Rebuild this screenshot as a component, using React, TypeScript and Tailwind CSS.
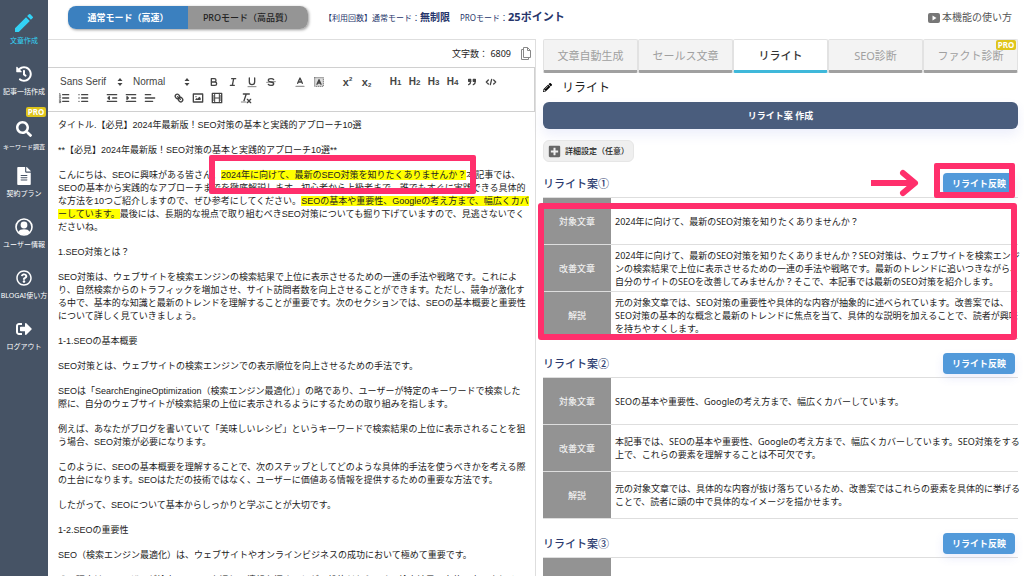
import type { ReactNode } from "react";
import {
  FaFileAlt,
  FaHistory,
  FaPencilAlt,
  FaPlusSquare,
  FaRegQuestionCircle,
  FaSearch,
  FaSignOutAlt,
} from "react-icons/fa";
import { MdEdit } from "react-icons/md";

const UserIcon = () => (
  <svg viewBox="0 0 18 18" className="w-[18px] h-[18px]" fill="none">
    <circle cx="9" cy="9" r="8" stroke="currentColor" strokeWidth="1.6" />
    <circle cx="9" cy="7" r="3.4" fill="currentColor" />
    <path d="M3.4 14.2c.8-2.4 2.8-3 5.6-3s4.800.6 5.600 3A8 8 0 0 1 3.400 14.200Z" fill="currentColor" />
  </svg>
);

const ProBadge = () => (
  <span className="w-5 h-[10px] rounded-[2px] bg-[#dfc51b] text-white text-[8px] leading-[10px] font-bold text-center">
    PRO
  </span>
);

const navItems = [
  { label: "文章作成", icon: <MdEdit size={24} />, active: true },
  { label: "記事一括作成", icon: <FaHistory size={16} /> },
  { label: "キーワード調査", icon: <FaSearch size={16} />, pro: true, small: true },
  { label: "契約プラン", icon: <FaFileAlt size={18} />, tight: true },
  { label: "ユーザー情報", icon: <UserIcon /> },
  { label: "BLOGAI使い方", icon: <FaRegQuestionCircle size={16} /> },
  { label: "ログアウト", icon: <FaSignOutAlt size={16} /> },
];

const Sidebar = () => (
  <nav className="w-12 shrink-0 bg-[#465365] flex flex-col gap-[15px] pt-[11px]">
    {navItems.map((item) => (
      <a
        key={item.label}
        href="#"
        className={`relative flex flex-col items-center whitespace-nowrap ${
          item.active ? "text-[#33d2f5]" : "text-white"
        } ${item.pro ? "mt-1" : ""} ${item.tight ? "-mt-1" : ""}`}
      >
        {item.pro && (
          <span className="absolute right-[2px] -top-[10px] flex">
            <ProBadge />
          </span>
        )}
        <span className="h-6 flex items-center">{item.icon}</span>
        <span
          className={`leading-3 ${item.small ? "text-[6px]" : "text-[7px]"}`}
        >
          {item.label}
        </span>
      </a>
    ))}
  </nav>
);

const TopBar = () => (
  <header className="h-[39px] shrink-0 flex items-center pl-5 pr-3 pb-1 text-[#26356b]">
    <div className="flex w-[240px] h-[23px] rounded-lg overflow-hidden shadow-[1px_1px_3px_rgba(0,0,0,0.4)] text-[9px]">
      <button className="flex-1 bg-[#3b80bf] text-white font-bold">
        通常モード（高速）
      </button>
      <button className="flex-1 bg-[#959595] text-[#222] font-medium">
        PROモード（高品質）
      </button>
    </div>
    <p className="ml-4 text-[8px] flex items-center whitespace-nowrap">
      【利用回数】通常モード：
      <strong className="text-[10px]">無制限</strong>
      <span className="ml-[10px]">PROモード：</span>
      <strong className="text-[11px]">25ポイント</strong>
    </p>
    <a
      href="#"
      className="ml-auto flex items-center gap-[2px] text-[10px] text-[#555]"
    >
      <svg viewBox="0 0 12 10" className="w-3 h-[10px]">
        <rect width="12" height="10" rx="2" fill="#777" />
        <path d="M4.500 2.500v5l4-2.500z" fill="#fff" />
      </svg>
      本機能の使い方
    </a>
  </header>
);

/* ---- editor toolbar ---- */

const Tool = ({ label, children }: { label: string; children: ReactNode }) => (
  <button
    aria-label={label}
    className="w-[19px] h-4 flex items-center justify-center"
  >
    {children}
  </button>
);

const Glyph = ({ children }: { children: ReactNode }) => (
  <svg
    viewBox="0 0 18 18"
    className="w-3 h-3"
    fill="none"
    stroke="#444"
    strokeWidth="2"
    strokeLinecap="round"
    strokeLinejoin="round"
  >
    {children}
  </svg>
);

const Heading = ({ level }: { level: number }) => (
  <Tool label={`見出し${level}`}>
    <span className="text-[10px] leading-3 font-bold">H</span>
    <span className="text-[8px] leading-3 font-bold pt-[2px]">{level}</span>
  </Tool>
);

const Picker = ({
  label,
  value,
  width,
}: {
  label: string;
  value: string;
  width: string;
}) => (
  <div className={`relative h-4 ${width}`}>
    <select
      aria-label={label}
      defaultValue={value}
      className="block appearance-none w-full h-4 pl-[6px] bg-transparent text-[10px] leading-4 font-medium"
    >
      <option>{value}</option>
    </select>
    <svg
      viewBox="0 0 6 8"
      className="absolute right-1 top-1 w-[6px] h-2 pointer-events-none"
      fill="#444"
    >
      <path d="M3 0l2.500 3h-5zM3 8L.5 5h5z" />
    </svg>
  </div>
);

const Toolbar = () => (
  <div className="border-y border-r border-[#d0d0d0] pt-[6px] pb-[5px] px-[6px] text-[#444] font-['Liberation_Sans','Noto_Sans_CJK_JP',sans-serif]">
    <div className="flex flex-wrap gap-x-[10px]">
      <div className="flex">
        <Picker label="フォント" value="Sans Serif" width="w-[73px]" />
        <Picker label="サイズ" value="Normal" width="w-[67px]" />
      </div>
      <div className="flex">
        <Tool label="太字">
          <Glyph>
            <path d="M5 4h4.500a2.500 2.500 0 0 1 0 5H5zM5 9h5.500a2.500 2.500 0 0 1 0 5H5z" />
          </Glyph>
        </Tool>
        <Tool label="斜体">
          <Glyph>
            <path d="M7 4h6M5 14h6M8 14l2-10" />
          </Glyph>
        </Tool>
        <Tool label="下線">
          <Glyph>
            <path d="M5 3v6a4 4 0 0 0 8 0V3" />
            <path d="M3 16h12" strokeWidth="1" />
          </Glyph>
        </Tool>
        <Tool label="取り消し線">
          <Glyph>
            <path d="M13 5.500C12.300 4.400 10.800 4 9 4 6.700 4 5 5 5 6.500S6.500 8.700 9 9s4 1 4 2.500S11.300 14 9 14c-1.800 0-3.300-.4-4-1.500" />
            <path d="M2.500 9.500l13-1" strokeWidth="1" />
          </Glyph>
        </Tool>
      </div>
      <div className="flex">
        <Tool label="文字色">
          <Glyph>
            <path d="M5.500 11L9 3l3.500 8M11.600 9H6.400" />
            <path d="M3 15.500h12" stroke="#999" />
          </Glyph>
        </Tool>
        <Tool label="背景色">
          <Glyph>
            <rect x="2.500" y="2.500" width="13" height="13" fill="#ddd" stroke="#777" strokeWidth="1.500" strokeDasharray="1 2" />
            <path d="M6 12.500L9 5.500l3 7M11 10.500H7" />
          </Glyph>
        </Tool>
      </div>
      <div className="flex">
        <Tool label="上付き">
          <span className="text-[11px] leading-3 font-bold">x</span>
          <span className="text-[6px] leading-3 font-bold pb-[6px]">2</span>
        </Tool>
        <Tool label="下付き">
          <span className="text-[11px] leading-3 font-bold">x</span>
          <span className="text-[6px] leading-3 font-bold pt-[6px]">2</span>
        </Tool>
      </div>
      <div className="flex">
        <Heading level={1} />
        <Heading level={2} />
        <Heading level={3} />
        <Heading level={4} />
        <Tool label="引用">
          <Glyph>
            <path d="M4 5h3v3H4zM11 5h3v3h-3z" fill="#444" />
            <path d="M7 8c0 4-3 5-3 5M14 8c0 4-3 5-3 5" />
          </Glyph>
        </Tool>
        <Tool label="コード">
          <Glyph>
            <path d="M5 6L2 9l3 3M13 6l3 3-3 3M10 5L8 13" />
          </Glyph>
        </Tool>
      </div>
    </div>
    <div className="flex flex-wrap gap-x-[10px]">
      <div className="flex">
        <Tool label="番号付きリスト">
          <Glyph>
            <path d="M7 4h9M7 9h9M7 14h9" />
            <path d="M2 3l1-1v4M2 6h2M2 8h2L2 11h2M2 13h2v3H2M2 14.500h2" strokeWidth="1" />
          </Glyph>
        </Tool>
        <Tool label="箇条書き">
          <Glyph>
            <path d="M7 4h9M7 9h9M7 14h9M3 4h0M3 9h0M3 14h0" />
          </Glyph>
        </Tool>
      </div>
      <div className="flex">
        <Tool label="インデント解除">
          <Glyph>
            <path d="M2 4h14M2 14h14M10 9h6" />
            <path d="M5 7v4L3 9z" fill="#444" />
          </Glyph>
        </Tool>
        <Tool label="インデント">
          <Glyph>
            <path d="M2 4h14M2 14h14M10 9h6" />
            <path d="M3 7v4l2-2z" fill="#444" />
          </Glyph>
        </Tool>
        <Tool label="配置">
          <Glyph>
            <path d="M2 4h8M2 9h14M2 14h11" />
          </Glyph>
        </Tool>
      </div>
      <div className="flex">
        <Tool label="リンク">
          <Glyph>
            <path d="M7 7l4 4" />
            <path d="M8.900 4.577a3.476 3.476 0 0 1 .36 4.679A3.476 3.476 0 0 1 4.577 8.900C3.185 7.500 2.035 6.400 4.217 4.217S7.500 3.185 8.900 4.577Z" />
            <path d="M13.423 9.100a3.476 3.476 0 0 0-4.679-.36 3.476 3.476 0 0 0 .36 4.679c1.392 1.392 2.500 2.542 4.679.36S14.815 10.500 13.423 9.100Z" />
          </Glyph>
        </Tool>
        <Tool label="画像">
          <Glyph>
            <rect x="2" y="3" width="14" height="12" />
            <circle cx="6" cy="7" r="1" fill="#444" stroke="none" />
            <path d="M5 12v-1l2-2 1 1 3-3 2 2v3z" fill="#444" stroke="none" />
          </Glyph>
        </Tool>
        <Tool label="動画">
          <Glyph>
            <rect x="2" y="2" width="14" height="14" />
            <path d="M5.500 2v14M12.500 2v14M6 9h6M2 6h3M2 9h3M2 12h3M13 6h3M13 9h3M13 12h3" strokeWidth="1.500" />
          </Glyph>
        </Tool>
      </div>
      <div className="flex">
        <Tool label="書式クリア">
          <Glyph>
            <path d="M5 3h9M6 13L9.400 3M11 11l5 5M16 11l-5 5" />
            <path d="M2 15h7" strokeWidth="1" />
          </Glyph>
        </Tool>
      </div>
    </div>
  </div>
);

const Mark = ({ children }: { children: ReactNode }) => (
  <mark className="bg-[#ffff00] text-inherit">{children}</mark>
);

const paragraphs = [
  "1.SEO対策とは？",
  "SEO対策は、ウェブサイトを検索エンジンの検索結果で上位に表示させるための一連の手法や戦略です。これによ\nり、自然検索からのトラフィックを増加させ、サイト訪問者数を向上させることができます。ただし、競争が激化す\nる中で、基本的な知識と最新のトレンドを理解することが重要です。次のセクションでは、SEOの基本概要と重要性\nについて詳しく見ていきましょう。",
  "1-1.SEOの基本概要",
  "SEO対策とは、ウェブサイトの検索エンジンでの表示順位を向上させるための手法です。",
  "SEOは「SearchEngineOptimization（検索エンジン最適化）」の略であり、ユーザーが特定のキーワードで検索した\n際に、自分のウェブサイトが検索結果の上位に表示されるようにするための取り組みを指します。",
  "例えば、あなたがブログを書いていて「美味しいレシピ」というキーワードで検索結果の上位に表示されることを狙\nう場合、SEO対策が必要になります。",
  "このように、SEOの基本概要を理解することで、次のステップとしてどのような具体的手法を使うべきかを考える際\nの土台になります。SEOはただの技術ではなく、ユーザーに価値ある情報を提供するための重要な方法です。",
  "したがって、SEOについて基本からしっかりと学ぶことが大切です。",
  "1-2.SEOの重要性",
  "SEO（検索エンジン最適化）は、ウェブサイトやオンラインビジネスの成功において極めて重要です。",
  "その理由は、ユーザーが検索エンジンを通じて情報を探すことが一般的だからです。検索結果の上位に表示されるこ",
];

const Editor = () => (
  <section className="flex flex-col min-h-0 overflow-hidden border-t border-r border-[#dedede]">
    <div className="h-[27px] shrink-0 flex items-center justify-end pr-1 text-[9px] text-[#222]">
      <span>文字数： 6809</span>
      <button aria-label="コピー" className="ml-[10px]">
        <svg
          viewBox="0 0 10 13"
          className="w-[10px] h-[13px]"
          fill="none"
          stroke="#888"
        >
          <path d="M2.500.5h4l3 3v7h-7zM6.500.5v3h3" />
          <path d="M2.500 2.500h-2v10h7v-2" />
        </svg>
      </button>
    </div>
    <Toolbar />
    <div
      role="textbox"
      aria-label="本文"
      aria-multiline="true"
      className="relative flex flex-col gap-3 px-[10px] pt-[7px] whitespace-pre text-[9px] leading-[13px] text-[#222] font-['Liberation_Sans','Noto_Sans_CJK_JP',sans-serif]"
    >
      <p>タイトル.【必見】2024年最新版！SEO対策の基本と実践的アプローチ10選</p>
      <p>**【必見】2024年最新版！SEO対策の基本と実践的アプローチ10選**</p>
      <p>
        こんにちは、SEOに興味がある皆さん、
        <Mark>2024年に向けて、最新のSEO対策を知りたくありませんか？</Mark>
        {"本記事では、\nSEOの基本から実践的なアプローチまでを徹底解説します。初心者から上級者まで、誰でもすぐに実践できる具体的\nな方法を10つご紹介しますので、ぜひ参考にしてください。"}
        <Mark>{"SEOの基本や重要性、Googleの考え方まで、幅広くカバ\nーしています。"}</Mark>
        {"最後には、長期的な視点で取り組むべきSEO対策についても掘り下げていますので、見逃さないでく\nださいね。"}
      </p>
      {paragraphs.map((text) => (
        <p key={text}>{text}</p>
      ))}
      <div className="absolute left-[161px] top-[43px] w-[267px] h-[39px] border-[6px] border-[#ff2f6c] rounded-[2px] pointer-events-none" />
    </div>
  </section>
);

/* ---- rewrite panel ---- */

const tabs = [
  { label: "文章自動生成" },
  { label: "セールス文章" },
  { label: "リライト", active: true },
  { label: "SEO診断" },
  { label: "ファクト診断", pro: true },
];

const proposals = [
  {
    title: "リライト案①",
    marked: true,
    rows: [
      ["対象文章", "2024年に向けて、最新のSEO対策を知りたくありませんか？"],
      [
        "改善文章",
        "2024年に向けて、最新のSEO対策を知りたくありませんか？SEO対策は、ウェブサイトを検索エンジ\nンの検索結果で上位に表示させるための一連の手法や戦略です。最新のトレンドに追いつきながら、\n自分のサイトのSEOを改善してみませんか？そこで、本記事では最新のSEO対策を紹介します。",
      ],
      [
        "解説",
        "元の対象文章では、SEO対策の重要性や具体的な内容が抽象的に述べられています。改善案では、\nSEO対策の基本的な概念と最新のトレンドに焦点を当て、具体的な説明を加えることで、読者が興味\nを持ちやすくします。",
      ],
    ],
  },
  {
    title: "リライト案②",
    rows: [
      ["対象文章", "SEOの基本や重要性、Googleの考え方まで、幅広くカバーしています。"],
      [
        "改善文章",
        "本記事では、SEOの基本や重要性、Googleの考え方まで、幅広くカバーしています。SEO対策をする\n上で、これらの要素を理解することは不可欠です。",
      ],
      [
        "解説",
        "元の対象文章では、具体的な内容が抜け落ちているため、改善案ではこれらの要素を具体的に挙げる\nことで、読者に頭の中で具体的なイメージを描かせます。",
      ],
    ],
  },
  {
    title: "リライト案③",
    rows: [["対象文章", ""]],
  },
];

const Proposal = ({ title, marked, rows }: (typeof proposals)[number]) => (
  <article className="relative">
    <div className="flex items-center justify-between h-[21px] mb-[3px] pr-[3px]">
      <h3 className="text-[11px] leading-4 font-medium text-[#2b3b6e]">
        {title}
      </h3>
      <button className="w-[72px] h-[21px] rounded-[4px] bg-[#5199da] text-white text-[9px] font-bold shadow-[0_4px_10px_rgba(80,100,220,0.12)]">
        リライト反映
      </button>
    </div>
    <table className="w-full table-fixed border-collapse text-[9px] leading-[13px]">
      <tbody>
        {rows.map(([label, text]) => (
          <tr key={label} className="h-[47px] border-y border-[#dedede]">
            <th className="w-[68px] bg-[#939393] text-[#eee] font-medium">
              {label}
            </th>
            <td className="pl-1 text-[#222] whitespace-pre">{text}</td>
          </tr>
        ))}
      </tbody>
    </table>
    {marked && (
      <div className="pointer-events-none text-[#ff2f6c]">
        <svg
          viewBox="0 0 50 28"
          className="absolute right-[98px] -top-[4px] w-[50px] h-7"
          fill="none"
          stroke="currentColor"
          strokeWidth="6"
        >
          <path d="M1 14h42" />
          <path d="M33 4l12 10-12 10" strokeLinecap="round" strokeLinejoin="round" />
        </svg>
        <div className="absolute right-[3px] -top-[10px] w-[81px] h-[35px] border-[6px] border-current rounded-[2px]" />
        <div className="absolute -left-[5px] right-[1px] top-[30px] h-[137px] border-[6px] border-current rounded-[3px]" />
      </div>
    )}
  </article>
);

const RewritePanel = () => (
  <section className="pl-[7px] pr-[6px] min-h-0">
    <div role="tablist" className="flex h-[34px] text-[11px]">
      {tabs.map((tab) => (
        <button
          key={tab.label}
          role="tab"
          aria-selected={!!tab.active}
          className={`relative flex-1 border border-b-[3px] rounded-[2px] pt-[2px] ${
            tab.active
              ? "bg-white font-medium text-[#333] border-[#e2e2e2] border-b-[#3fb8da]"
              : "bg-[#f3f3f3] text-[#a0a0a0] border-[#e2e2e2] border-b-[#a0a0a0]"
          }`}
        >
          {tab.label}
          {tab.pro && (
            <span className="absolute right-[1px] top-0 flex">
              <ProBadge />
            </span>
          )}
        </button>
      ))}
    </div>
    <h2 className="flex items-center gap-[10px] h-[29px] text-[12px] text-[#222]">
      <FaPencilAlt size={9} className="text-black" />
      リライト
    </h2>
    <button className="block w-full h-[27px] rounded-md bg-[#4a5d7d] text-white text-[9px] font-bold shadow-[0_6px_12px_rgba(80,100,220,0.1)]">
      リライト案 作成
    </button>
    <button className="flex items-center gap-1 h-[22px] mt-[11px] px-1 rounded-md border border-[#e6e6e6] bg-[#efefef] text-[8px] font-medium text-[#222]">
      <FaPlusSquare size={13} className="text-[#666]" />
      詳細設定（任意）
    </button>
    <div className="flex flex-col gap-[14px] mt-[11px]">
      {proposals.map((proposal) => (
        <Proposal key={proposal.title} {...proposal} />
      ))}
    </div>
  </section>
);

export default function App() {
  return (
    <div className="flex h-screen overflow-hidden bg-white font-['Noto_Sans','Noto_Sans_CJK_JP',sans-serif]">
      <Sidebar />
      <div className="flex-1 min-w-0 flex flex-col">
        <TopBar />
        <main className="flex-1 min-h-0 grid grid-cols-2">
          <Editor />
          <RewritePanel />
        </main>
      </div>
    </div>
  );
}
